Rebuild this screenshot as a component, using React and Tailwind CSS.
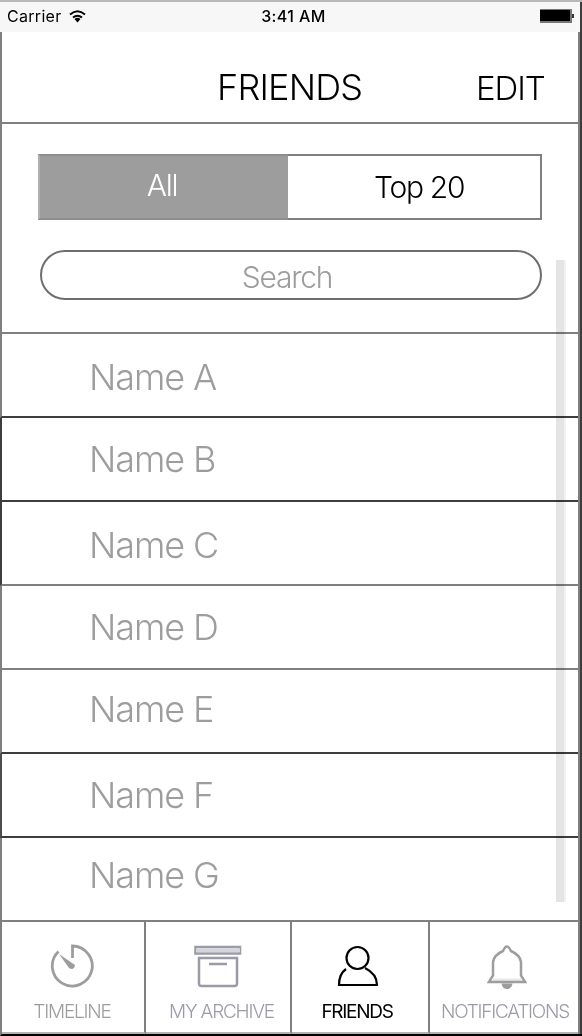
const rows = [
  { name: 'Name A', pad: 'pt-[21px]', line: 'border-[#3d3d3d]', left: 'border-l-[#7f7f7f]' },
  { name: 'Name B', pad: 'pt-[19px]', line: 'border-[#3d3d3d]', left: 'border-l-[#3d3d3d]' },
  { name: 'Name C', pad: 'pt-[21px]', line: 'border-[#7f7f7f]', left: 'border-l-[#3d3d3d]' },
  { name: 'Name D', pad: 'pt-[19px]', line: 'border-[#7f7f7f]', left: 'border-l-[#7f7f7f]' },
  { name: 'Name E', pad: 'pt-[17px]', line: 'border-[#3d3d3d]', left: 'border-l-[#7f7f7f]' },
  { name: 'Name F', pad: 'pt-[19px]', line: 'border-[#3d3d3d]', left: 'border-l-[#4d4d4d]' },
  { name: 'Name G', pad: 'pt-[15px]', line: 'border-[#7f7f7f]', left: 'border-l-[#7f7f7f]' },
];

function Label({ children, className }) {
  return <span className={`whitespace-nowrap text-[19px] leading-6 font-light ${className}`}>{children}</span>;
}

export default function App() {
  return (
    <div className="relative flex h-[1036px] w-[582px] flex-col overflow-hidden bg-white font-['Inter','Liberation_Sans',sans-serif] font-light text-black">
      <div className="flex h-8 shrink-0 items-center justify-between border-t-2 border-[#b8b8b8] bg-[#f7f7f7] pr-[8px] pl-[7px] text-[16px] font-normal">
        <div className="flex w-[120px] items-center gap-[7px] pb-[2px]">
          <span className="tracking-[0.3px]">Carrier</span>
          <svg width="17" height="13" viewBox="0 0 17 13">
            <path d="M1 4.5Q8.5-2 16 4.5M4 7.5Q8.5 4 13 7.5" fill="none" stroke="#000" strokeWidth="2" />
            <path d="M5.5 9Q8.5 6.5 11.5 9L8.5 12.5Z" />
          </svg>
        </div>
        <span className="pb-[2px] pl-[6px] font-medium tracking-[0.4px]">3:41 AM</span>
        <div className="flex w-[120px] items-center justify-end pb-[2px]">
          <div className="h-[14px] w-8 border-t border-r-2 border-b-2 border-[#777] bg-black" />
          <div className="h-1 w-[2px] bg-[#333]" />
        </div>
      </div>
      <header className="flex h-[92px] shrink-0 border-b-2 border-l-2 border-[#7f7f7f] leading-[44px]">
        <h1 className="mt-[33px] ml-[215px] w-[259px] text-[36px] tracking-[-0.8px]">FRIENDS</h1>
        <span className="mt-[34px] text-[33px] tracking-[-1.1px]">EDIT</span>
      </header>
      <section className="flex h-[210px] shrink-0 flex-col gap-[30px] border-b-2 border-l-2 border-[#7f7f7f] pt-[30px] pl-9">
        <div className="flex h-[66px] w-[504px] border-2 border-[#7f7f7f] text-[30px] leading-[62px]">
          <div className="-my-[2px] -ml-[2px] w-[250px] border-y-2 border-l-2 border-y-[#8e8e8e] border-l-[#b0b0b0] bg-[#9d9d9d] pr-1 text-center leading-[59px] tracking-[-1.2px] text-white">All</div>
          <div className="flex-1 pl-[86px] tracking-[-1.3px]">Top 20</div>
        </div>
        <div className="ml-[2px] h-[50px] w-[502px] rounded-full border-2 border-[#6e6e6e] pt-[2px] pr-2 text-center text-[30px] leading-[46px] tracking-[-1.2px] text-[#9d9d9d]">Search</div>
      </section>
      <ul className="shrink-0">
        {rows.map((r) => (
          <li key={r.name} className={`h-[84px] border-b-2 border-l-2 pl-[87px] text-[36px] leading-[44px] tracking-[-1.1px] ${r.line} ${r.left} ${r.pad}`}>
            <span className="text-[#9d9d9d]">{r.name}</span>
          </li>
        ))}
      </ul>
      <nav className="flex h-[114px] shrink-0 border-b-2 border-l-2 border-b-black border-l-[#7f7f7f] text-[#9d9d9d]">
        <div className="flex w-[144px] flex-col items-center border-r-2 border-b-2 border-r-[#7f7f7f] border-b-[#b2b2b2] pt-[22px] pr-[2px]">
          <svg width="44" height="44" viewBox="0 0 44 44" fill="none" stroke="currentColor" strokeWidth="2.8">
            <path d="M22.5 14V2A20 20 0 1 1 8.5 7.5" />
            <path d="M9 10L19 24Q24 27 25 21Z" fill="currentColor" stroke="none" />
          </svg>
          <Label className="mt-[12px] tracking-[-1.2px]">TIMELINE</Label>
        </div>
        <div className="flex w-[146px] flex-col items-center border-r-2 border-b-2 border-r-[#7f7f7f] border-b-[#b2b2b2] pt-[22px] text-[#9b9aa8]">
          <svg width="48" height="44" viewBox="0 0 48 44" fill="none" stroke="currentColor" strokeWidth="2.5">
            <path d="M1.5 3H46V9.5H1.5ZM5 14H43V39.5Q43 42 40.5 42H7.5Q5 42 5 39.5ZM15 20H33" />
            <path d="M2 6.2H46" stroke="#d4d4da" strokeWidth="4" />
          </svg>
          <Label className="mt-[12px] ml-[7px] tracking-[-1.2px]">MY ARCHIVE</Label>
        </div>
        <div className="flex w-[138px] flex-col items-center border-r-2 border-b-2 border-r-[#7f7f7f] border-b-[#b2b2b2] pt-[22px] pr-1 text-black">
          <svg width="42" height="44" viewBox="0 0 42 44" fill="none" stroke="currentColor" strokeWidth="2.2">
            <circle cx="20.5" cy="14" r="11" />
            <path d="M9 25Q2 30 2 41H40Q40 30 28 24" />
          </svg>
          <Label className="mt-[12px] mr-[2px] font-normal tracking-[-1.3px]">FRIENDS</Label>
        </div>
        <div className="flex flex-1 flex-col items-center border-b-2 border-b-[#b2b2b2] pt-[22px] pr-[2px]">
          <svg className="ml-[4px]" width="40" height="46" viewBox="0 0 40 46" fill="none" stroke="currentColor" strokeWidth="2.5">
            <path d="M6 36H34" stroke="#e8e8e8" strokeWidth="3" />
            <path d="M2 38L6 31.5V18Q7 11 16 7Q20-2 24 7Q33 11 34 18V31.5L38 38Z" />
            <path d="M14.5 39.5H25.5Q24.5 45 20 45Q15.5 45 14.5 39.5Z" fill="currentColor" stroke="none" />
          </svg>
          <Label className="mt-[10px] tracking-[-1.25px] text-[#9b9aa8]">NOTIFICATIONS</Label>
        </div>
      </nav>
      <div className="absolute top-[260px] left-[556px] h-[642px] w-[10px] border-r-2 border-[#f2f2f2] bg-[#e4e4e4] mix-blend-multiply" />
      <div className="absolute top-[2px] left-[580px] h-[1032px] w-[2px] bg-[#3d3d3d]" />
      <div className="absolute top-8 left-[578px] h-[1002px] w-[2px] bg-[#7f7f7f]" />
    </div>
  );
}
